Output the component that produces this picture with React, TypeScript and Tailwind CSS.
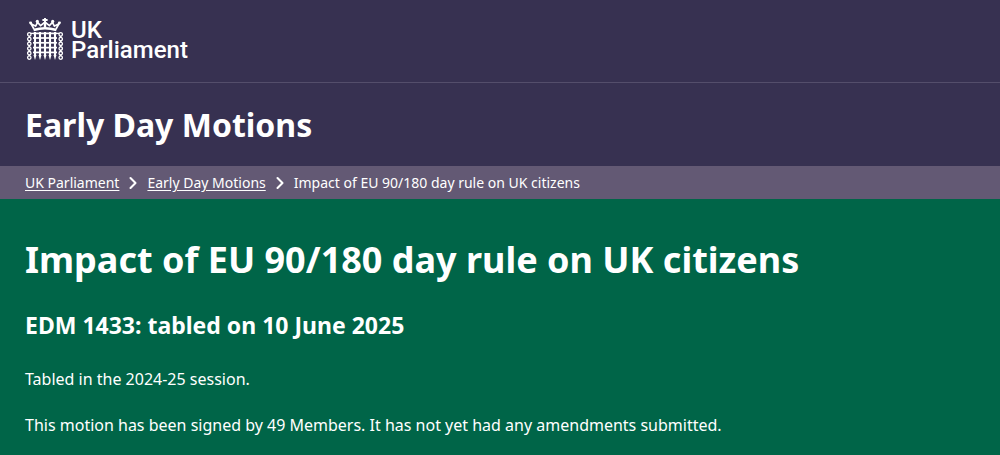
import React from 'react';
import { ChevronRight } from 'lucide-react';

const breadcrumbs = [
  { label: 'UK Parliament', href: '#parliament' },
  { label: 'Early Day Motions', href: '#motions' },
];

const bars = [8, 13, 18, 23, 28];
const rails = [15.4, 20, 24.8, 29.6, 34.4];
const links = [16.4, 21.1, 25.8, 30.5, 35.2, 39.6];

const Portcullis: React.FC = () => (
  <svg className="h-[42px] w-9 shrink-0" viewBox="0 0 36 42" fill="none" stroke="white" aria-hidden="true">
    {/* crown */}
    <path d="M6.6 12 Q18 8.4 29.4 12" strokeWidth="2.4" />
    <path d="M7 11 L4 5.6 L8.6 8.2 L10.6 4.4 L13.6 7.6 L18 4 L22.4 7.6 L25.4 4.4 L27.4 8.2 L32 5.6 L29 11" strokeWidth="1.7" />
    <path d="M18 4 V9.6" strokeWidth="2.4" />
    <path d="M18 0 V5 M15.4 2 H20.6" strokeWidth="1.9" />
    <circle cx="3.7" cy="5" r="1.4" fill="white" stroke="none" />
    <circle cx="10.3" cy="3.4" r="1.6" fill="white" stroke="none" />
    <circle cx="25.7" cy="3.4" r="1.6" fill="white" stroke="none" />
    <circle cx="32.3" cy="5" r="1.4" fill="white" stroke="none" />

    {/* gate */}
    {bars.map((x) => (
      <g key={x}>
        <path d={`M${x} 14 V38`} strokeWidth="2.1" />
        <path d={`M${x - 1.5} 37 H${x + 1.5} L${x} 42 Z`} fill="white" stroke="none" />
      </g>
    ))}
    {rails.map((y) => (
      <path key={y} d={`M6 ${y} H30`} strokeWidth="1.7" />
    ))}

    {/* chains */}
    {[2.3, 33.7].map((x) => (
      <g key={x}>
        {links.map((y) => (
          <circle key={y} cx={x} cy={y} r="1.7" strokeWidth="1.3" />
        ))}
        <path d={`M${x} 18 V19.5 M${x} 22.7 V24.2 M${x} 27.4 V28.9 M${x} 32.1 V33.6 M${x} 36.8 V38`} strokeWidth="1.6" />
      </g>
    ))}
    <path d="M4 15.4 H6 M32 15.4 H30" strokeWidth="1.4" />
  </svg>
);

const App: React.FC = () => {
  return (
    <div className="min-h-screen bg-[#006548] font-['Noto_Sans',sans-serif] text-white">
      <header className="bg-[#373151]">
        <div className="border-b border-[#544e6b] px-[27px] pt-[18px] pb-[22px]">
          <a href="#home" className="flex w-fit items-end gap-2">
            <Portcullis />
            <span className="font-[Roboto,sans-serif] text-2xl leading-5 font-medium">
              <span className="block">UK</span>
              <span className="block">Parliament</span>
            </span>
          </a>
        </div>
        <div className="px-[25px] py-5">
          <p className="text-[32px] leading-[43px] font-bold">Early Day Motions</p>
        </div>
      </header>

      <nav aria-label="Breadcrumb" className="bg-[#635974] px-[25px] py-1.5">
        <ol className="flex flex-wrap items-center text-sm leading-[21px]">
          {breadcrumbs.map((crumb) => (
            <li key={crumb.href} className="flex items-center">
              <a href={crumb.href} className="underline underline-offset-2">
                {crumb.label}
              </a>
              <ChevronRight className="mx-1 size-5" strokeWidth={2.5} aria-hidden="true" />
            </li>
          ))}
          <li aria-current="page">Impact of EU 90/180 day rule on UK citizens</li>
        </ol>
      </nav>

      <main className="px-[25px] pt-9 pb-4">
        <h1 className="text-[36px] leading-[50px] font-bold">Impact of EU 90/180 day rule on UK citizens</h1>
        <h2 className="mt-6 text-[23px] leading-8 font-bold">EDM 1433: tabled on 10 June 2025</h2>
        <p className="mt-[26px] text-base leading-6">Tabled in the 2024-25 session.</p>
        <p className="mt-[22px] text-base leading-6">
          This motion has been signed by 49 Members. It has not yet had any amendments submitted.
        </p>
      </main>
    </div>
  );
};

export default App;
